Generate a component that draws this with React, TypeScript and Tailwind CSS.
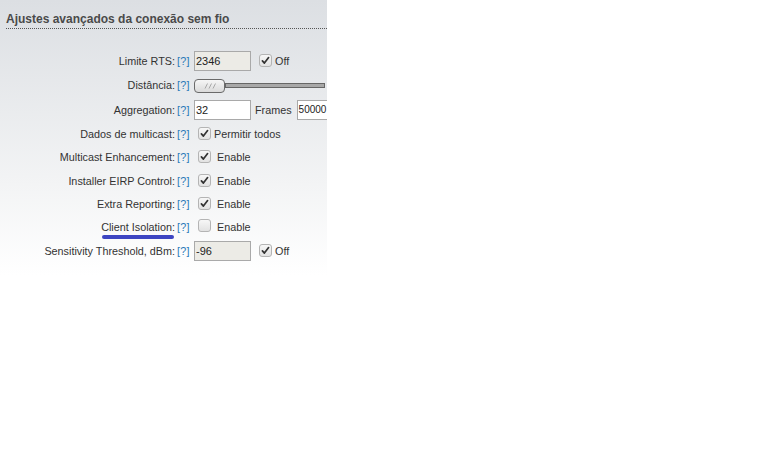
import React from "react";

function Check({ checked }: { checked: boolean }) {
  return (
    <span className="inline-flex h-[13px] w-[13px] shrink-0 items-center justify-center rounded-[3px] border border-[#b4b4b4] bg-gradient-to-b from-[#f7f7f7] to-[#e2e2e2]">
      {checked && (
        <svg width="9" height="9" viewBox="0 0 9 9">
          <path d="M1.4 4.9 L3.4 7.1 L7.6 1.6" fill="none" stroke="#333" strokeWidth="1.7" strokeLinecap="round" strokeLinejoin="round" />
        </svg>
      )}
    </span>
  );
}

function Row({ label, h, mark, children }: { label: string; h: string; mark?: boolean; children: React.ReactNode }) {
  return (
    <div className={`flex items-center whitespace-nowrap ${h}`}>
      <div className="w-[175px] shrink-0 text-right text-[#333]">
        <span className="relative">
          {label}
          {mark && <span className="absolute left-[1px] right-[1px] bottom-[-6px] h-[4px] rounded-full bg-[#3d45c2]" />}
        </span>
      </div>
      <span className="ml-[2px] w-[17px] shrink-0 tracking-[0.3px] text-[#2a7ab8]">[?]</span>
      {children}
    </div>
  );
}

const field = "h-[20px] shrink-0 border border-[#a9a9a9] px-[1px] text-[11px] leading-[18px] text-[#222]";

export default function App() {
  return (
    <div className="h-[460px] w-[768px] bg-white font-['Liberation_Sans',Arial,sans-serif] text-[10.8px]">
      <div className="h-[460px] w-[327px] overflow-hidden bg-gradient-to-b from-[#dcdfe3] via-[#f3f4f5] via-40% to-white to-60%">
        <div className="ml-[6px] h-[29px] border-b border-dotted border-[#555] pt-[12px] text-[12px] font-bold leading-[15px] text-[#4a4a4a]">
          Ajustes avançados da conexão sem fio
        </div>
        <div className="pt-[20px]">
          <Row label="Limite RTS:" h="h-[24px]">
            <div className={`${field} w-[57px] bg-[#ecebe6]`}>2346</div>
            <span className="ml-[8px]"><Check checked /></span>
            <span className="ml-[3px] text-[#333]">Off</span>
          </Row>
          <Row label="Distância:" h="h-[25px]">
            <div className="flex items-center">
              <div className="flex h-[14px] w-[31px] shrink-0 items-center justify-center rounded-[4px] border border-[#6a6a6a] bg-gradient-to-b from-[#f6f6f6] to-[#dadada]">
                <svg width="12" height="6" viewBox="0 0 12 6">
                  <path d="M1 5.5 L3.5 0.5 M5 5.5 L7.5 0.5 M9 5.5 L11.5 0.5" stroke="#a0a0a0" strokeWidth="0.9" fill="none" />
                </svg>
              </div>
              <div className="h-[5px] w-[100px] shrink-0 border border-[#666] bg-[#a8a8a8]" />
            </div>
          </Row>
          <Row label="Aggregation:" h="h-[24px]">
            <div className={`${field} w-[57px] bg-white`}>32</div>
            <span className="ml-[4px] text-[#333]">Frames</span>
            <div className="ml-[5px] h-[20px] w-[31px] shrink-0 border-y border-l border-[#a9a9a9] bg-white pl-[1px] text-[10px] leading-[18px] text-[#222]">50000</div>
          </Row>
          <Row label="Dados de multicast:" h="h-[24px]">
            <span className="ml-[4px]"><Check checked /></span>
            <span className="ml-[3px] text-[#333]">Permitir todos</span>
          </Row>
          <Row label="Multicast Enhancement:" h="h-[23px]">
            <span className="ml-[4px]"><Check checked /></span>
            <span className="ml-[6px] text-[#333]">Enable</span>
          </Row>
          <Row label="Installer EIRP Control:" h="h-[24px]">
            <span className="ml-[4px]"><Check checked /></span>
            <span className="ml-[6px] text-[#333]">Enable</span>
          </Row>
          <Row label="Extra Reporting:" h="h-[23px]">
            <span className="ml-[4px]"><Check checked /></span>
            <span className="ml-[6px] text-[#333]">Enable</span>
          </Row>
          <Row label="Client Isolation:" h="h-[23px]" mark>
            <span className="ml-[4px]"><Check checked={false} /></span>
            <span className="ml-[6px] text-[#333]">Enable</span>
          </Row>
          <Row label="Sensitivity Threshold, dBm:" h="h-[24px]">
            <div className={`${field} w-[57px] bg-[#ecebe6]`}>-96</div>
            <span className="ml-[8px]"><Check checked /></span>
            <span className="ml-[3px] text-[#333]">Off</span>
          </Row>
        </div>
      </div>
    </div>
  );
}
